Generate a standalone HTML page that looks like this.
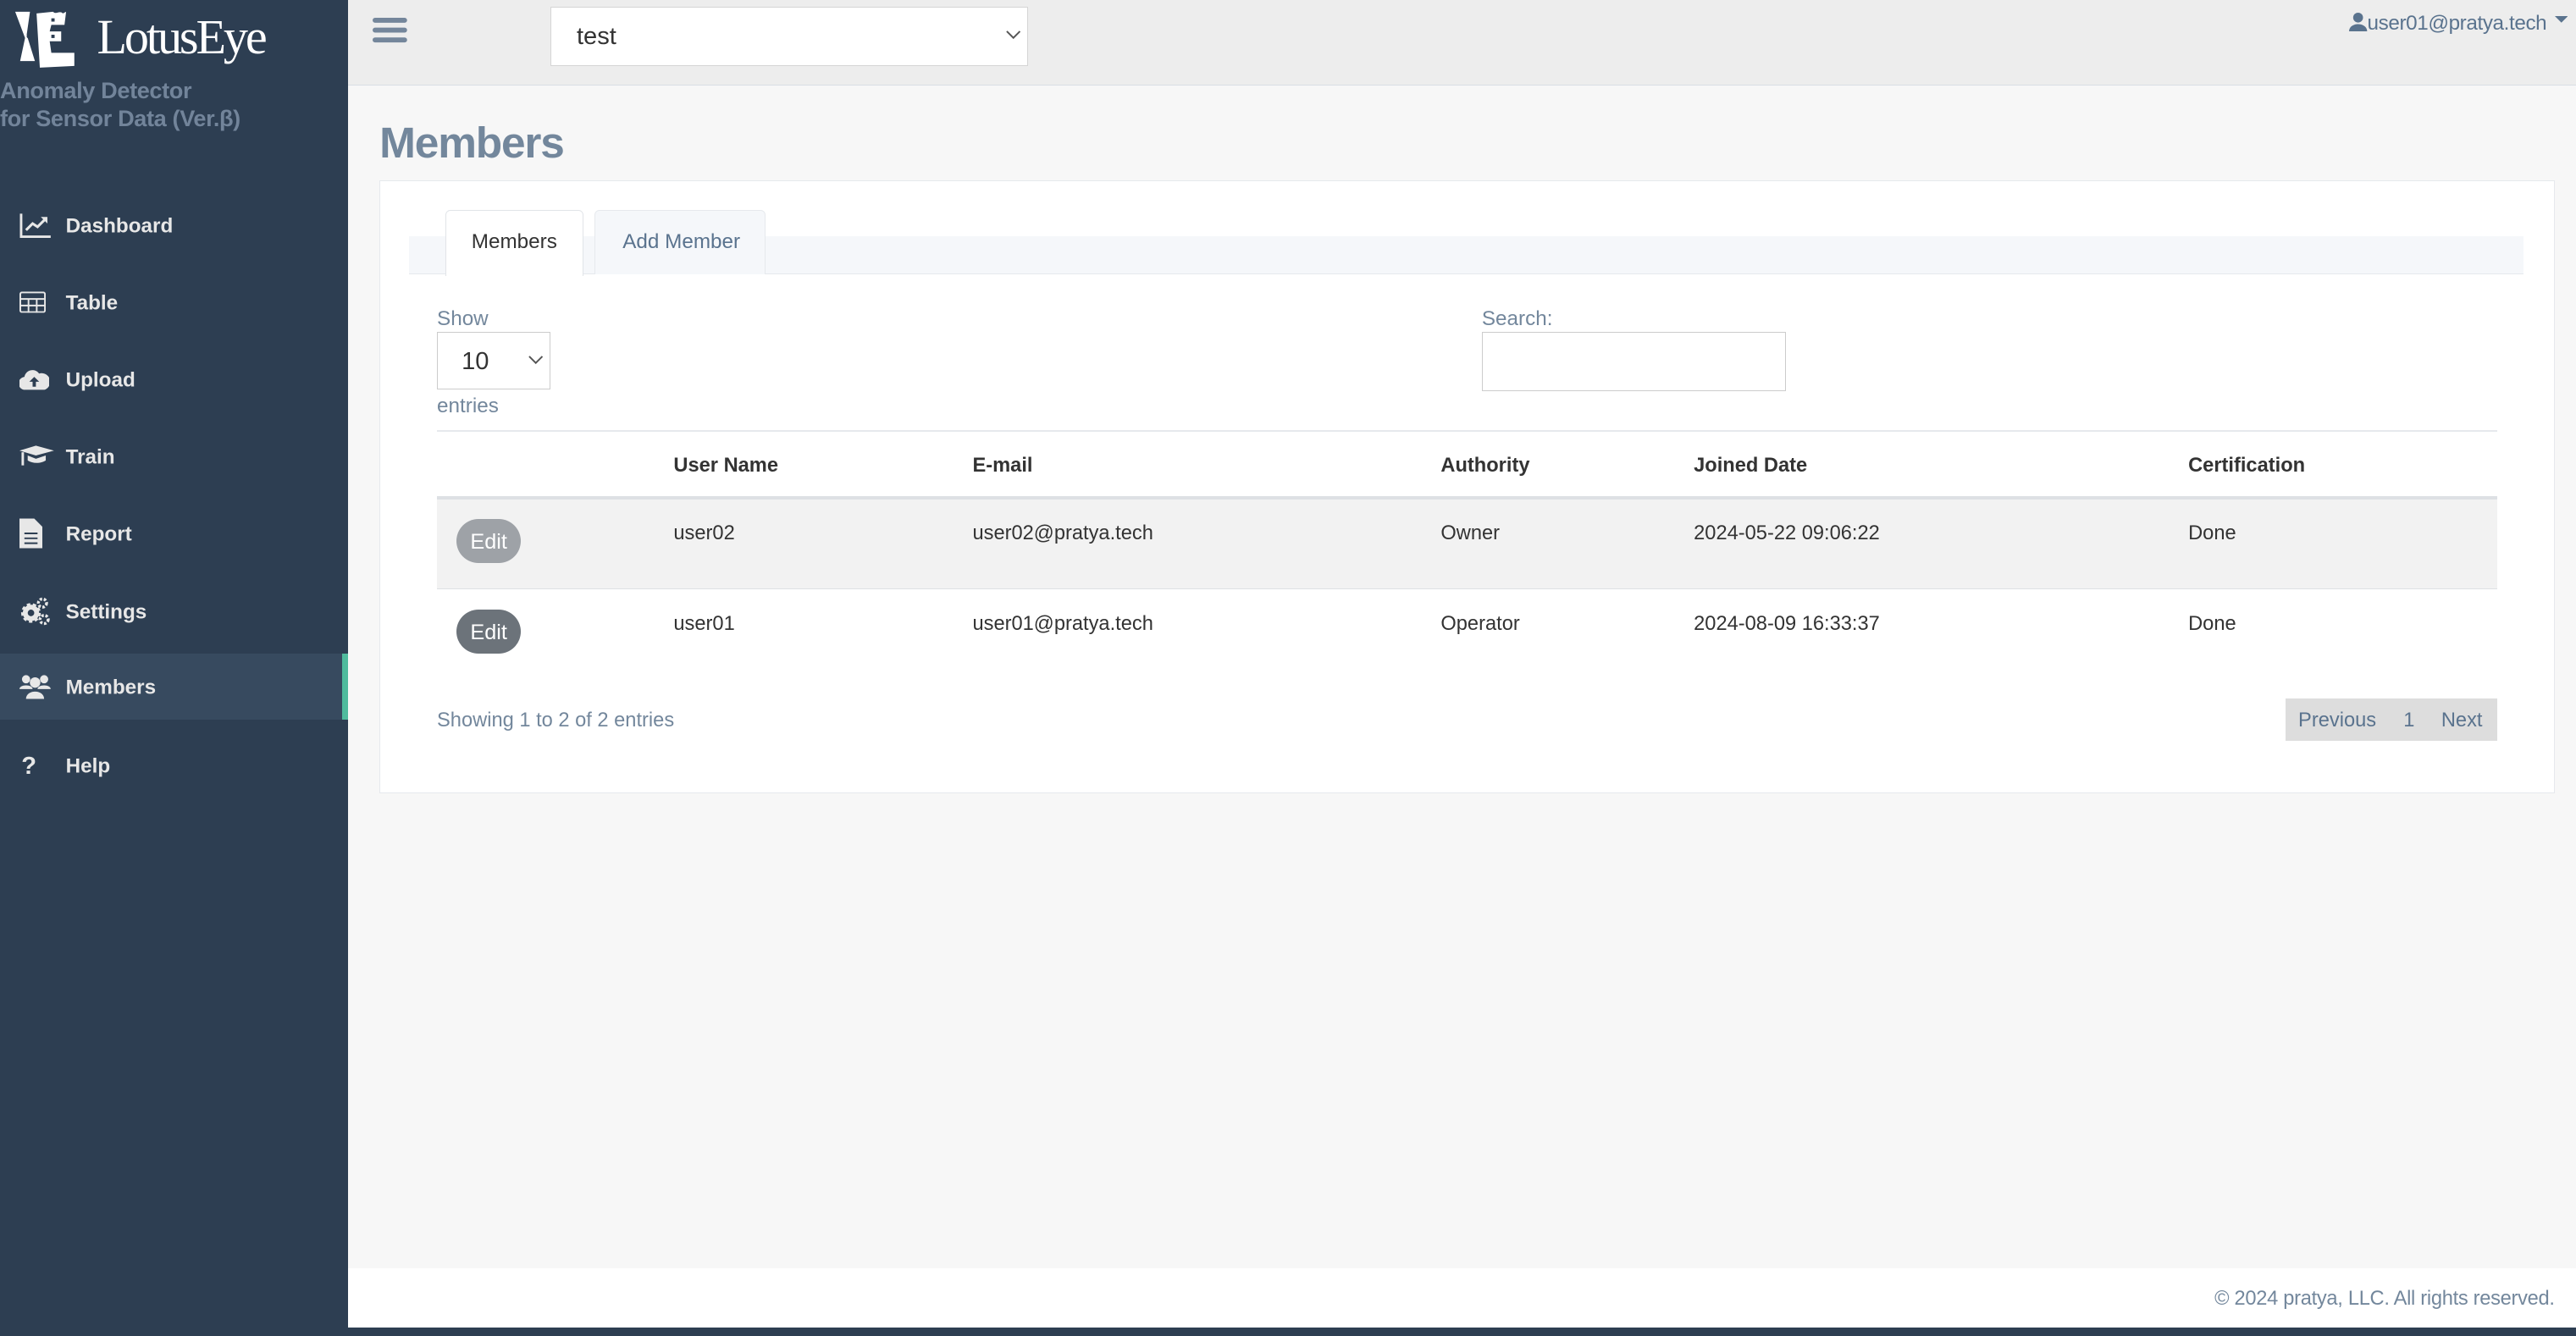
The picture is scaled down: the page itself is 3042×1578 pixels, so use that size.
<!DOCTYPE html>
<html><head><meta charset="utf-8"><style>
*{box-sizing:border-box;margin:0;padding:0}
html,body{width:3042px;height:1578px;overflow:hidden;background:#f7f7f7;font-family:"Liberation Sans",Helvetica,Arial,sans-serif}
#w{position:relative;width:1568px;height:814px;zoom:1.94;background:#f7f7f7;overflow:hidden}
.abs{position:absolute}
#side{left:0;top:0;width:212px;height:814px;background:#2d3e52}
.nav{position:absolute;left:0;width:212px;height:40px;color:#e7e7e7;font-size:12.5px;font-weight:bold}
.nav span{position:absolute;left:40px;top:50%;transform:translateY(-45%)}
.nav svg{position:absolute;left:12px;top:50%;transform:translateY(-50%)}
.nav.act{background:#374a5f}
.nav.act:after{content:"";position:absolute;right:0;top:0;width:4px;height:40px;background:#4fbb9d}
.t{position:absolute;white-space:nowrap}
</style></head><body><div id="w">
<div id="side" class="abs">
  <svg class="abs" style="left:8px;top:5px" width="38" height="36" viewBox="0 0 38 36"><path d="M1 2 L10 2 L8 16 L13 32 L4 32 L7 18 Z" fill="#fff"/><circle cx="9" cy="17" r="1" fill="#2d3e52"/><path d="M14 3 L24 2 C26 4 28 1 30 3 L32 2 L31 10 L23 10 L22 14 L29 14 L29 20 L22 20 L23 27 L37 27 L37 35 L16 36 Z" fill="#fff"/><rect x="23" y="6" width="2" height="2" fill="#2d3e52"/><rect x="23" y="16" width="2" height="2" fill="#2d3e52"/></svg>
  <div class="t" style="left:59px;top:5px;font-family:'Liberation Serif',serif;font-size:30px;color:#fff;letter-spacing:-1.6px">LotusEye</div>
  <div class="t" style="left:0;top:47px;font-size:14px;color:#72849a;font-weight:bold;line-height:17px;letter-spacing:-0.2px">Anomaly Detector<br>for Sensor Data (Ver.β)</div>
  <div class="nav" style="top:117px"><svg width="19" height="16" viewBox="0 0 19 16"><path d="M1 1V15H19" stroke="#e7e7e7" stroke-width="1.5" fill="none"/><path d="M4 11L8 7L11 9L16 4" stroke="#e7e7e7" stroke-width="1.6" fill="none"/><path d="M13 3H17V7Z" fill="#e7e7e7"/></svg><span>Dashboard</span></div>
  <div class="nav" style="top:164px"><svg width="16" height="13" viewBox="0 0 16 13"><rect x="0.5" y="0.5" width="15" height="12" rx="1" fill="none" stroke="#e7e7e7"/><path d="M0 4.5H16M0 8.5H16M5.5 4V13M10.5 4V13" stroke="#e7e7e7"/></svg><span>Table</span></div>
  <div class="nav" style="top:211px"><svg width="18" height="13" viewBox="0 0 18 13"><path d="M4 13A4 4 0 0 1 3 5A5 5 0 0 1 12 3A4 4 0 0 1 15 13Z" fill="#e7e7e7"/><path d="M9 5L6 8H8V11H10V8H12Z" fill="#2d3e52"/></svg><span>Upload</span></div>
  <div class="nav" style="top:258px"><svg width="21" height="15" viewBox="0 0 21 15"><path d="M0 4L10 1L21 4L10 7Z" fill="#e7e7e7"/><path d="M5 7V10C8 12 13 12 16 10V7L10 9Z" fill="#e7e7e7"/><path d="M2 5V13" stroke="#e7e7e7" stroke-width="1.5"/></svg><span>Train</span></div>
  <div class="nav" style="top:305px"><svg width="14" height="18" viewBox="0 0 14 18"><path d="M0 0H9L14 5V18H0Z" fill="#e7e7e7"/><path d="M3 9H11M3 12H11M3 15H11" stroke="#2d3e52"/></svg><span>Report</span></div>
  <div class="nav" style="top:352px"><svg width="19" height="18" viewBox="0 0 19 18"><circle cx="7" cy="10" r="5" fill="#e7e7e7" stroke="#e7e7e7" stroke-width="2" stroke-dasharray="2 1.5"/><circle cx="7" cy="10" r="2" fill="#2d3e52"/><circle cx="14" cy="4" r="2.5" fill="none" stroke="#e7e7e7" stroke-width="1.8" stroke-dasharray="1.5 1"/><circle cx="15" cy="14" r="2.5" fill="none" stroke="#e7e7e7" stroke-width="1.8" stroke-dasharray="1.5 1"/></svg><span>Settings</span></div>
  <div class="nav act" style="top:398px"><svg width="19" height="15" viewBox="0 0 19 15"><circle cx="4" cy="3" r="2.5" fill="#e7e7e7"/><circle cx="15" cy="3" r="2.5" fill="#e7e7e7"/><circle cx="9.5" cy="5" r="3.2" fill="#e7e7e7"/><path d="M0 9C0 6 8 6 8 9ZM11 9C11 6 19 6 19 9ZM4 15C4 9 15 9 15 15Z" fill="#e7e7e7"/></svg><span>Members</span></div>
  <div class="nav" style="top:446px"><span style="left:13px;font-size:15px">?</span><span>Help</span></div>
</div>
<div class="abs" style="left:212px;top:0;width:1356px;height:52px;background:#ededed;border-bottom:1px solid #d9dee4"></div>
<svg class="abs" style="left:227px;top:11px" width="21" height="16"><rect y="0" width="21" height="3" rx="1.5" fill="#74869b"/><rect y="6" width="21" height="3" rx="1.5" fill="#74869b"/><rect y="12" width="21" height="3" rx="1.5" fill="#74869b"/></svg>
<div class="abs" style="left:335px;top:4px;width:291px;height:36px;background:#fff;border:1px solid #d5d5d5"></div>
<div class="t" style="left:351px;top:14px;font-size:15px;color:#333">test</div>
<svg class="abs" style="left:612px;top:18px" width="10" height="7"><path d="M1 1L5 5L9 1" stroke="#555" fill="none"/></svg>
<svg class="abs" style="left:1430px;top:7px" width="11" height="12"><circle cx="5.5" cy="3.5" r="3" fill="#5a738e"/><path d="M0 12C0 6 11 6 11 12Z" fill="#5a738e"/></svg>
<div class="t" style="left:1441px;top:7px;font-size:12.5px;color:#5a738e;letter-spacing:-0.2px">user01@pratya.tech</div>
<svg class="abs" style="left:1555px;top:10px" width="8" height="5"><path d="M0 0H8L4 4Z" fill="#5a738e"/></svg>
<div class="t" style="left:231px;top:71px;font-size:26.5px;color:#73879c;font-weight:bold;letter-spacing:-0.6px">Members</div>
<div class="abs" style="left:231px;top:110px;width:1324px;height:373px;background:#fff;border:1px solid #e6e9ed"></div>
<div class="abs" style="left:249px;top:144px;width:1287px;height:23px;background:#f5f7fa;border-bottom:1px solid #e6e9ed"></div>
<div class="abs" style="left:271px;top:128px;width:84px;height:40px;background:#fff;border:1px solid #e1e4e8;border-bottom:none;border-radius:3px 3px 0 0"></div>
<div class="t" style="left:287px;top:140px;font-size:12.5px;color:#333">Members</div>
<div class="abs" style="left:362px;top:128px;width:104px;height:39px;background:#f5f7fa;border:1px solid #e6e9ed;border-bottom:none;border-radius:3px 3px 0 0"></div>
<div class="t" style="left:379px;top:140px;font-size:12.5px;color:#5a738e">Add Member</div>
<div class="t" style="left:266px;top:187px;font-size:12.5px;color:#73879c">Show</div>
<div class="abs" style="left:266px;top:202px;width:69px;height:35px;border:1px solid #ccc;background:#fff"></div>
<div class="t" style="left:281px;top:212px;font-size:15px;color:#333">10</div>
<svg class="abs" style="left:321px;top:216px" width="10" height="7"><path d="M1 1L5 5L9 1" stroke="#555" fill="none"/></svg>
<div class="t" style="left:266px;top:240px;font-size:12.5px;color:#73879c">entries</div>
<div class="t" style="left:902px;top:187px;font-size:12.5px;color:#73879c">Search:</div>
<div class="abs" style="left:902px;top:202px;width:185px;height:36px;border:1px solid #ccc;background:#fff"></div>
<div class="abs" style="left:266px;top:262px;width:1254px;height:1px;background:#e6e9ed"></div>
<div class="abs" style="left:266px;top:302px;width:1254px;height:2px;background:#dde0e4"></div>
<div class="abs" style="left:266px;top:304px;width:1254px;height:55px;background:#f2f2f2;border-bottom:1px solid #dde0e4"></div>
<div style="font-size:12.2px;color:#333;font-weight:bold">
<div class="t" style="left:410px;top:277px">User Name</div><div class="t" style="left:592px;top:277px">E-mail</div><div class="t" style="left:877px;top:277px">Authority</div><div class="t" style="left:1031px;top:277px">Joined Date</div><div class="t" style="left:1332px;top:277px">Certification</div>
</div>
<div style="font-size:12.2px;color:#333">
<div class="t" style="left:410px;top:318px">user02</div><div class="t" style="left:592px;top:318px">user02@pratya.tech</div><div class="t" style="left:877px;top:318px">Owner</div><div class="t" style="left:1031px;top:318px">2024-05-22 09:06:22</div><div class="t" style="left:1332px;top:318px">Done</div>
<div class="t" style="left:410px;top:373px">user01</div><div class="t" style="left:592px;top:373px">user01@pratya.tech</div><div class="t" style="left:877px;top:373px">Operator</div><div class="t" style="left:1031px;top:373px">2024-08-09 16:33:37</div><div class="t" style="left:1332px;top:373px">Done</div>
</div>
<div class="abs" style="left:278px;top:316px;width:39px;height:27px;border-radius:14px;background:#9ea2a7;color:#fff;font-size:13px;text-align:center;line-height:28px">Edit</div>
<div class="abs" style="left:278px;top:371px;width:39px;height:27px;border-radius:14px;background:#6c737a;color:#fff;font-size:13px;text-align:center;line-height:28px">Edit</div>
<div class="t" style="left:266px;top:432px;font-size:12.2px;color:#73879c">Showing 1 to 2 of 2 entries</div>
<div class="abs" style="left:1391px;top:425px;width:129px;height:26px;background:#dddddd"></div>
<div class="t" style="left:1399px;top:432px;font-size:12.2px;color:#5a738e">Previous</div>
<div class="t" style="left:1463px;top:432px;font-size:12.2px;color:#5a738e">1</div>
<div class="t" style="left:1486px;top:432px;font-size:12.2px;color:#5a738e">Next</div>
<div class="abs" style="left:212px;top:772px;width:1356px;height:36px;background:#fff"></div>
<div class="t" style="right:13px;top:784px;font-size:12.2px;color:#73879c;letter-spacing:-0.15px">© 2024 pratya, LLC. All rights reserved.</div>
<div class="abs" style="left:0;top:808px;width:1568px;height:6px;background:#2d3e52"></div>
</div></body></html>
